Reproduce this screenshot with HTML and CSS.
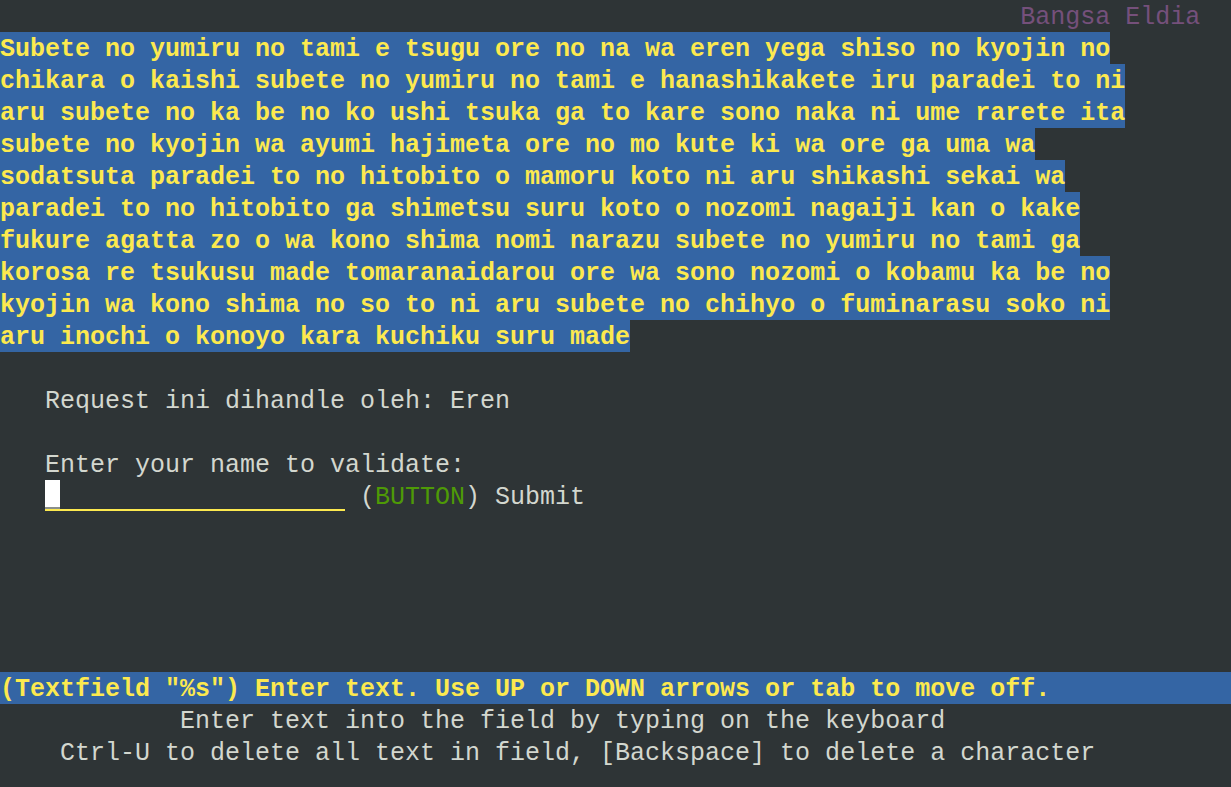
FILE: index.html
```html
<!DOCTYPE html>
<html>
<head>
<meta charset="utf-8">
<link rel="stylesheet" href="styles.css">
</head>
<body>
<div class="screen">
  <div class="row title"><span class="magenta">Bangsa Eldia</span></div>
  <div class="row"><span class="hl">Subete no yumiru no tami e tsugu ore no na wa eren yega shiso no kyojin no</span></div>
  <div class="row"><span class="hl">chikara o kaishi subete no yumiru no tami e hanashikakete iru paradei to ni</span></div>
  <div class="row"><span class="hl">aru subete no ka be no ko ushi tsuka ga to kare sono naka ni ume rarete ita</span></div>
  <div class="row"><span class="hl">subete no kyojin wa ayumi hajimeta ore no mo kute ki wa ore ga uma wa</span></div>
  <div class="row"><span class="hl">sodatsuta paradei to no hitobito o mamoru koto ni aru shikashi sekai wa</span></div>
  <div class="row"><span class="hl">paradei to no hitobito ga shimetsu suru koto o nozomi nagaiji kan o kake</span></div>
  <div class="row"><span class="hl">fukure agatta zo o wa kono shima nomi narazu subete no yumiru no tami ga</span></div>
  <div class="row"><span class="hl">korosa re tsukusu made tomaranaidarou ore wa sono nozomi o kobamu ka be no</span></div>
  <div class="row"><span class="hl">kyojin wa kono shima no so to ni aru subete no chihyo o fuminarasu soko ni</span></div>
  <div class="row"><span class="hl">aru inochi o konoyo kara kuchiku suru made</span></div>
  <div class="row"></div>
  <div class="row indent">Request ini dihandle oleh: Eren</div>
  <div class="row"></div>
  <div class="row indent">Enter your name to validate:</div>
  <div class="row indent"><span class="field"><span class="cursor"></span></span> (<span class="green">BUTTON</span>) Submit</div>
  <div class="spacer"></div>
  <div class="row status">(Textfield "%s") Enter text. Use UP or DOWN arrows or tab to move off.</div>
  <div class="row help1">Enter text into the field by typing on the keyboard</div>
  <div class="row help2">Ctrl-U to delete all text in field, [Backspace] to delete a character</div>
</div>
</body>
</html>
```

FILE: styles.css
```css
html, body {
  margin: 0;
  padding: 0;
  background: #2e3436;
}
body {
  width: 1231px;
  height: 787px;
  overflow: hidden;
}
.screen {
  font-family: "Courier New", "Nimbus Mono PS", "Nimbus Mono L", "FreeMono", "Courier 10 Pitch", "Liberation Mono", monospace;
  font-size: 25px;
  color: #d3d7cf;
  display: flex;
  flex-direction: column;
}
.row {
  height: 32px;
  line-height: 36px;
  white-space: pre;
}
.title {
  padding-left: 68ch;
}
.magenta {
  color: #75507b;
}
.hl {
  background: #3465a4;
  color: #fce94f;
  font-weight: bold;
  display: inline-block;
  height: 32px;
  line-height: 36px;
}
.indent {
  padding-left: 3ch;
}
.field {
  display: inline-block;
  width: 20ch;
  height: 31px;
  vertical-align: top;
  border-bottom: 2px solid #fce94f;
  box-sizing: border-box;
  position: relative;
}
.cursor {
  position: absolute;
  left: 0;
  top: 0;
  width: 1ch;
  height: 27px;
  background: #ffffff;
  border-bottom: 2px solid #8a8f8c;
}
.green {
  color: #4e9a06;
}
.spacer {
  height: 160px;
}
.status {
  background: #3465a4;
  color: #fce94f;
  font-weight: bold;
}
.help1 {
  padding-left: 12ch;
}
.help2 {
  padding-left: 4ch;
}
```
